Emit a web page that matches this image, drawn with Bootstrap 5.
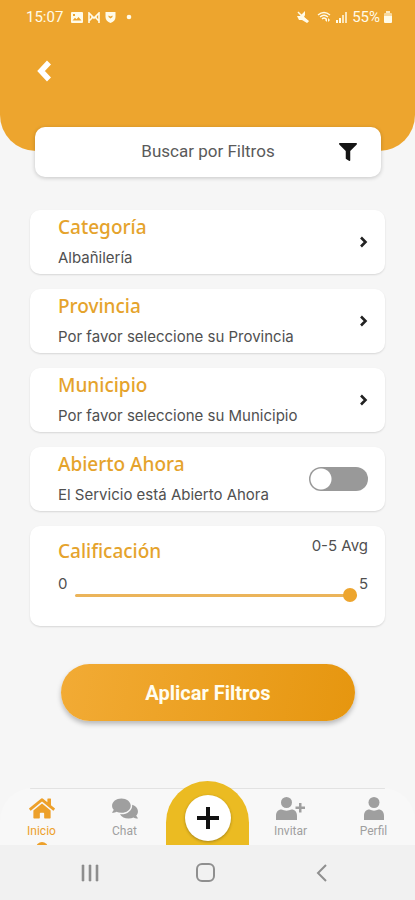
<!DOCTYPE html>
<html lang="es">
<head>
<meta charset="utf-8">
<meta name="viewport" content="width=device-width, initial-scale=1">
<title>Buscar por Filtros</title>
<link href="https://cdn.jsdelivr.net/npm/bootstrap@5.3.0/dist/css/bootstrap.min.css" rel="stylesheet">
<style>
:root { --brand: #eda52e; --ink: #505050; }
body { background: #f6f6f6; font-family: Roboto, "Liberation Sans", sans-serif; color: var(--ink); }
svg { display: block; fill: currentColor; flex: none; }
.app-head { background: var(--brand); border-radius: 0 0 36px 36px; padding-bottom: 67px; color: #fffbe8; }
.status-bar { height: 34px; padding: 0 23px 0 26px; font-size: 15px; line-height: 20px; }
.back-btn { margin: 24px 0 0 32px; width: 24px; height: 26px; color: #fff; }
.search-box { margin: -24px 34px 0 35px; min-height: 50px; border-radius: 10px; background: #fff; box-shadow: 0 1px 4px rgba(0,0,0,.2); padding: 0 24px; display: grid; grid-template-columns: 18px 1fr 18px; align-items: center; font-size: 17px; color: #5a5a5a; border: 0; }
.search-box svg { color: #151515; }
.filters { padding: 33px 30px 0; gap: 15px; }
.filter-card { background: #fff; border: 0; border-radius: 10px; box-shadow: 0 1px 2px rgba(0,0,0,.13); min-height: 64px; padding: 4px 17px 4px 28px; font-family: Inter, "Noto Sans", sans-serif; font-size: 15px; line-height: 24px; color: var(--ink); }
.filter-title { font-family: "Noto Sans", sans-serif; font-size: 19px; line-height: 26px; font-weight: 500; color: #e5a32c; margin: 0 0 6px; }
.filter-card svg { color: #222; }
.rating-card { padding-top: 8px; padding-bottom: 24px; }
.rating-card .filter-title { margin: 0; }
.form-switch .form-check-input.open-switch { width: 59px; height: 24px; margin: 0; border: 0; background-color: #999; background-image: radial-gradient(circle at 12px 12px, #fff 10px, transparent 11px); background-position: left center; }
.form-switch .form-check-input.open-switch:checked { background-color: var(--brand); background-image: radial-gradient(circle at 47px 12px, #fff 10px, transparent 11px); }
.rate-range { margin: 16px 2px 0 8px; height: 14px; width: auto; }
.rate-range::-webkit-slider-runnable-track { height: 3px; background: #ebb45a; }
.rate-range::-webkit-slider-thumb { width: 14px; height: 14px; margin-top: -6px; background: var(--brand); box-shadow: none; }
.rate-range::-moz-range-track { height: 3px; background: #ebb45a; }
.rate-range::-moz-range-thumb { width: 14px; height: 14px; background: var(--brand); }
.apply-btn { margin: 38px 60px 0 61px; height: 57px; border: 0; border-radius: 29px; color: #fffdf0; font-size: 20px; font-weight: 700; background: linear-gradient(100deg, #f2ab35, #e6960f); box-shadow: 0 3px 5px rgba(0,0,0,.25); }
.tab-bar { background: linear-gradient(#e2e2e2, #e2e2e2) center top / calc(100% - 60px) 1px no-repeat, #f8f8f8; border-radius: 32px 32px 0 0; height: 57px; font-size: 12px; line-height: 14px; }
.tab-row { margin-top: -7px; }
.tab-bar a { color: #9f9f9f; text-decoration: none; height: 56px; overflow: hidden; padding-top: 8px; }
.tab-bar a.on { color: #eda02a; }
.tab-dot { width: 12px; height: 12px; border-radius: 50%; background: currentColor; margin-top: 4px; flex: none; }
.add-tab { height: 64px; background: #ebbb22; border-radius: 42px 42px 0 0; padding-top: 5px; }
.add-btn { width: 46px; height: 46px; margin-top: 9px; border: 0; border-radius: 50%; background: #fff; color: #111; box-shadow: 0 1px 3px rgba(0,0,0,.3); }
.sys-bar { background: #f1f1f1; height: 55px; padding: 0 84px 0 81px; }
.sys-bar svg { color: #8f8f8f; }
</style>
</head>
<body>
<div class="min-vh-100 d-flex flex-column">
  <header class="app-head">
    <div class="status-bar d-flex align-items-center">
      <span>15:07</span>
      <svg class="ms-2" width="12" height="11" viewBox="0 0 12 11"><path fill-rule="evenodd" d="M1 0h10a1 1 0 0 1 1 1v9a1 1 0 0 1-1 1H1a1 1 0 0 1-1-1V1a1 1 0 0 1 1-1zm.5 8.500h9L7.500 5 5.500 7.200 4 5.800zM2 2v2h2V2z"/></svg>
      <svg class="ms-1" width="14" height="11" viewBox="0 0 14 11"><path fill="none" stroke="currentColor" stroke-width="1.600" d="M2 11V1l5 5 5-5v10M2 9l3-3V4M12 9L9 6V4"/></svg>
      <svg class="ms-1" width="11" height="12" viewBox="0 0 10 12"><path fill-rule="evenodd" d="M0 1h10v5c0 3-2 5-5 6-3-1-5-3-5-6zM3 4.500V6l2 1.500L7 6V4.500L5 5.500z"/></svg>
      <svg class="ms-2" width="12" height="6" viewBox="0 0 12 6"><circle cx="5" cy="3" r="2.300"/></svg>
      <svg class="ms-auto" width="12" height="12" viewBox="0 0 12 12"><path d="M0 5l3 0L8 0v4L7 6l5 4-2 2-5-3-3 0z"/><path d="M1 1l10 10" stroke="currentColor" stroke-width="1.500"/></svg>
      <svg class="ms-2" width="15" height="12" viewBox="0 0 15 12"><path d="M1 4q6-5 12 0M3 6q4-3.500 8 0M5 8q2-2 4 0" fill="none" stroke="currentColor" stroke-width="1.400"/><path d="M8 9l2-2v4zM11 7l2 2-2 2z"/></svg>
      <svg class="ms-1" width="12" height="11" viewBox="0 0 12 11"><path d="M0 8h2v3H0zM3 6h2v5H3z"/><path d="M6 3h2v8H6zM9 0h2v11H9z" opacity=".75"/></svg>
      <span class="ms-1">55%</span>
      <svg class="ms-1" width="8" height="12" viewBox="0 0 8 12"><path d="M2 0h4v2H2z" opacity=".8"/><path d="M0 5h8v6a1 1 0 0 1-1 1H1a1 1 0 0 1-1-1z"/><path d="M0 3a1 1 0 0 1 1-1h6a1 1 0 0 1 1 1v2H0z" opacity=".6"/></svg>
    </div>
    <button type="button" class="back-btn btn border-0 p-0 d-flex align-items-center justify-content-center" aria-label="Volver"><svg width="18" height="24" viewBox="0 0 18 24"><path d="M14 3.500L6 12l8 8.500" fill="none" stroke="currentColor" stroke-width="5.500"/></svg></button>
  </header>

  <button type="button" class="search-box text-center">
    <span></span><span>Buscar por Filtros</span>
    <svg width="18" height="18" viewBox="0 0 512 512"><path d="M488 0H24C3 0-8 26 7 41l185 185v206c0 8 4 15 10 20l80 56c16 11 38 0 38-20V226L505 41C520 26 509 0 488 0z"/></svg>
  </button>

  <main class="filters d-flex flex-column">
    <button type="button" class="filter-card d-flex align-items-center justify-content-between text-start">
      <span><span class="filter-title d-block">Categoría</span><span class="d-block">Albañilería</span></span>
      <svg width="9" height="12" viewBox="0 0 9 12"><path d="M2 1.500L6.500 6 2 10.500" fill="none" stroke="currentColor" stroke-width="2.600"/></svg>
    </button>
    <button type="button" class="filter-card d-flex align-items-center justify-content-between text-start">
      <span><span class="filter-title d-block">Provincia</span><span class="d-block">Por favor seleccione su Provincia</span></span>
      <svg width="9" height="12" viewBox="0 0 9 12"><path d="M2 1.500L6.500 6 2 10.500" fill="none" stroke="currentColor" stroke-width="2.600"/></svg>
    </button>
    <button type="button" class="filter-card d-flex align-items-center justify-content-between text-start">
      <span><span class="filter-title d-block">Municipio</span><span class="d-block">Por favor seleccione su Municipio</span></span>
      <svg width="9" height="12" viewBox="0 0 9 12"><path d="M2 1.500L6.500 6 2 10.500" fill="none" stroke="currentColor" stroke-width="2.600"/></svg>
    </button>
    <div class="filter-card d-flex align-items-center justify-content-between">
      <label for="open"><span class="filter-title d-block">Abierto Ahora</span><span class="d-block">El Servicio está Abierto Ahora</span></label>
      <div class="form-switch p-0 m-0 d-flex"><input class="form-check-input open-switch" type="checkbox" role="switch" id="open"></div>
    </div>
    <div class="filter-card rating-card">
      <div class="d-flex justify-content-between">
        <label class="filter-title pt-1" for="rating">Calificación</label><span>0-5 Avg</span>
      </div>
      <div class="d-flex mt-2 align-items-start">
        <span>0</span><input type="range" class="form-range rate-range flex-fill" id="rating" min="0" max="5" value="5"><span>5</span>
      </div>
    </div>
  </main>
  <button type="button" class="apply-btn">Aplicar Filtros</button>

  <footer class="mt-auto">
    <nav class="tab-bar d-flex align-items-start" aria-label="Principal">
      <div class="tab-row row g-0 row-cols-5 align-items-end w-100">
        <a href="#" class="col on d-flex flex-column align-items-center"><svg width="26" height="23" viewBox="0 0 576 512"><path d="M280.370 148.260L96 300.110V464a16 16 0 0 0 16 16l112.060-.290a16 16 0 0 0 15.920-16V368a16 16 0 0 1 16-16h64a16 16 0 0 1 16 16v95.640a16 16 0 0 0 16 16.050L464 480a16 16 0 0 0 16-16V300L295.670 148.260a12.190 12.190 0 0 0-15.300 0zM571.600 251.470L488 182.560V44.050a12 12 0 0 0-12-12h-56a12 12 0 0 0-12 12v72.610L318.470 43a48 48 0 0 0-61 0L4.340 251.470a12 12 0 0 0-1.600 16.900l25.500 31A12 12 0 0 0 45.150 301l235.220-193.740a12.190 12.190 0 0 1 15.300 0L530.900 301a12 12 0 0 0 16.900-1.600l25.500-31a12 12 0 0 0-1.700-16.930z"/></svg><span class="mt-1">Inicio</span><span class="tab-dot"></span></a>
        <a href="#" class="col d-flex flex-column align-items-center"><svg width="26" height="23" viewBox="0 0 576 512"><path d="M416 192c0-88.400-93.100-160-208-160S0 103.600 0 192c0 34.300 14.100 65.900 38 92-13.400 30.200-35.500 54.200-35.800 54.500-2.200 2.300-2.800 5.700-1.500 8.700S4.800 352 8 352c36.600 0 66.900-12.300 88.700-25 32.200 15.700 70.300 25 111.300 25 114.900 0 208-71.600 208-160zm122 220c23.900-26 38-57.700 38-92 0-66.900-53.500-124.200-129.300-148.100.9 6.600 1.300 13.300 1.300 20.100 0 105.900-107.700 192-240 192-10.800 0-21.300-.8-31.700-1.900C207.800 439.600 281.800 480 368 480c41 0 79.100-9.200 111.300-25 21.800 12.700 52.100 25 88.700 25 3.200 0 6.100-1.900 7.300-4.800 1.300-2.900.7-6.300-1.500-8.700-.3-.3-22.400-24.200-35.800-54.500z"/></svg><span class="mt-1">Chat</span></a>
        <div class="col add-tab d-flex justify-content-center"><button type="button" class="add-btn d-flex align-items-center justify-content-center p-0" aria-label="Agregar"><svg width="24" height="24" viewBox="0 0 24 24"><path d="M10 1h4v9h9v4h-9v9h-4v-9H1v-4h9z"/></svg></button></div>
        <a href="#" class="col d-flex flex-column align-items-center"><svg width="29" height="23" viewBox="0 0 29 23"><circle cx="10.500" cy="5.500" r="5.500"/><path d="M0 23v-4c0-4 2-6.500 5.500-6.500 3 1.500 7 1.500 10 0 3.500 0 5.500 2.500 5.500 6.500v4z"/><path d="M23 6h2.500v3.500H29V12h-3.500v3.500H23V12h-3.500V9.500H23z"/></svg><span class="mt-1">Invitar</span></a>
        <a href="#" class="col d-flex flex-column align-items-center"><svg width="20" height="23" viewBox="0 0 20 23"><circle cx="10" cy="5.500" r="5.500"/><path d="M0 23v-4c0-4 2-6.500 5.500-6.500 3 1.500 6 1.500 9 0 3.500 0 5.500 2.500 5.500 6.500v4z"/></svg><span class="mt-1">Perfil</span></a>
      </div>
    </nav>
    <div class="sys-bar d-flex align-items-center justify-content-between">
      <button type="button" class="btn border-0 p-0 d-flex align-items-center justify-content-center" aria-label="Recientes"><svg width="18" height="18" viewBox="0 0 18 18"><path d="M1 1h2v16H1zM8 1h2v16H8zM15 1h2v16h-2z" stroke="currentColor" stroke-width=".6"/></svg></button>
      <button type="button" class="btn border-0 p-0 d-flex align-items-center justify-content-center" aria-label="Inicio del sistema"><svg width="20" height="20" viewBox="0 0 20 20"><rect x="1" y="1" width="17" height="17" rx="5" fill="none" stroke="currentColor" stroke-width="2"/></svg></button>
      <button type="button" class="btn border-0 p-0 d-flex align-items-center justify-content-center" aria-label="Atrás"><svg width="18" height="18" viewBox="0 0 18 18"><path d="M13 1L5 9l8 8" fill="none" stroke="currentColor" stroke-width="2"/></svg></button>
    </div>
  </footer>
</div>
<script src="https://cdn.jsdelivr.net/npm/bootstrap@5.3.0/dist/js/bootstrap.bundle.min.js"></script>
</body>
</html>
